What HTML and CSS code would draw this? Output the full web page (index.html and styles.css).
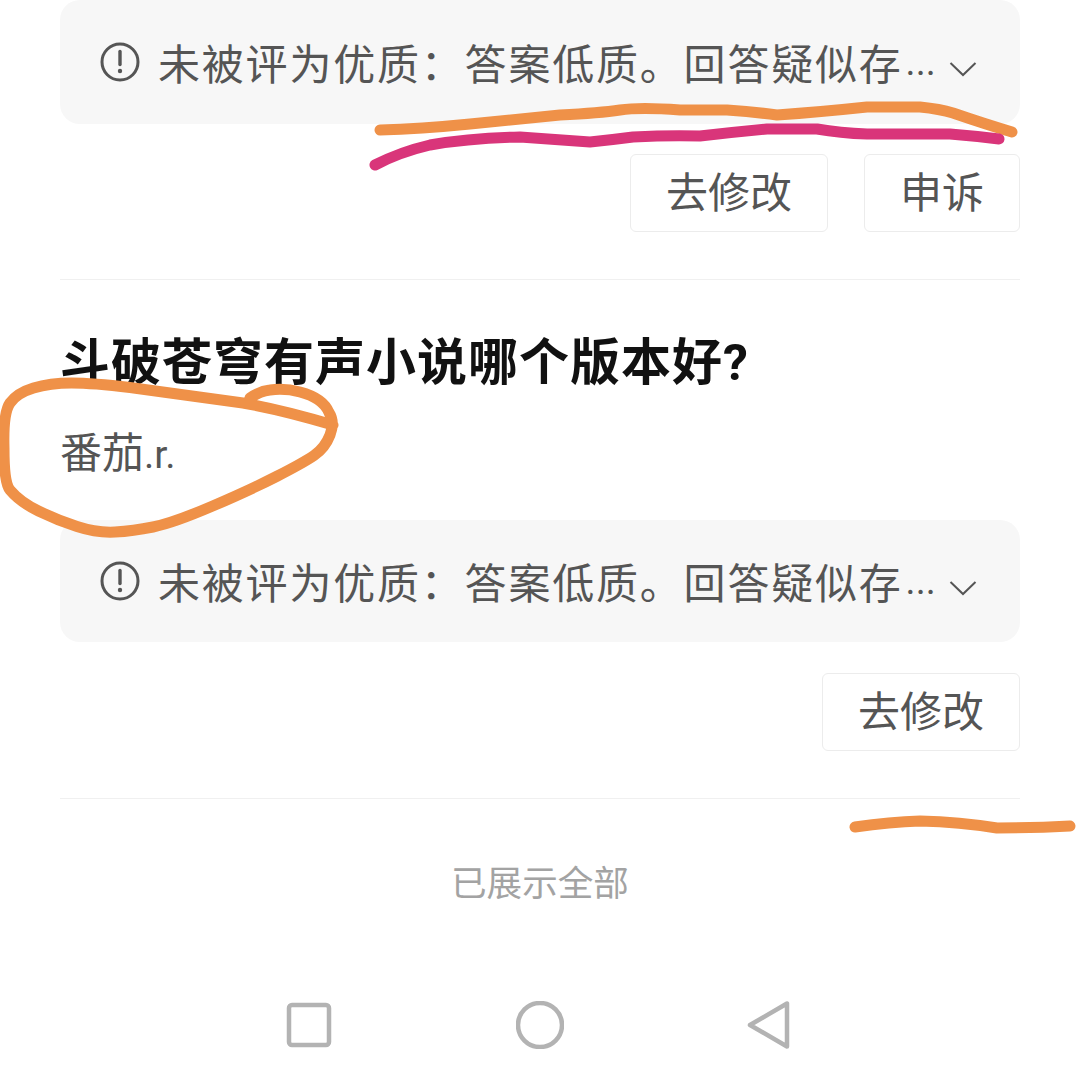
FILE: index.html
```html
<!DOCTYPE html>
<html lang="zh-CN">
<head>
<meta charset="utf-8">
<title>已展示全部</title>
<link rel="stylesheet" href="styles.css">
</head>
<body>
<div class="screen">
  <main class="list">
    <section class="item item-first">
      <div class="notice">
        <svg class="notice-icon" viewBox="0 0 40 40"><circle cx="20" cy="20" r="18" fill="none" stroke="#555" stroke-width="3"/><path d="M20 9.5v13" stroke="#555" stroke-width="3.4" stroke-linecap="round"/><circle cx="20" cy="29" r="2.2" fill="#555"/></svg>
        <span class="notice-text">未被评为优质&#xFF1A;答案低质。回答疑似存</span>
        <span class="notice-more">...</span>
        <svg class="chevron" viewBox="0 0 28 16"><path d="M1.5 2 14 14 26.500 2" fill="none" stroke="#555" stroke-width="2"/></svg>
      </div>
      <div class="actions">
        <button class="btn btn-wide">去修改</button>
        <button class="btn btn-narrow">申诉</button>
      </div>
    </section>
    <section class="item">
      <h2 class="title">斗破苍穹有声小说哪个版本好?</h2>
      <div class="author">番茄<span class="author-latin">.r.</span></div>
      <div class="notice notice-second">
        <svg class="notice-icon" viewBox="0 0 40 40"><circle cx="20" cy="20" r="18" fill="none" stroke="#555" stroke-width="3"/><path d="M20 9.5v13" stroke="#555" stroke-width="3.4" stroke-linecap="round"/><circle cx="20" cy="29" r="2.2" fill="#555"/></svg>
        <span class="notice-text">未被评为优质&#xFF1A;答案低质。回答疑似存</span>
        <span class="notice-more">...</span>
        <svg class="chevron" viewBox="0 0 28 16"><path d="M1.5 2 14 14 26.500 2" fill="none" stroke="#555" stroke-width="2"/></svg>
      </div>
      <div class="actions actions-second">
        <button class="btn btn-wide">去修改</button>
      </div>
    </section>
    <div class="end-note">已展示全部</div>
  </main>
  <nav class="navbar">
    <svg class="nav-icon nav-square" viewBox="0 0 48 48"><rect x="4" y="4" width="40" height="40" rx="3" fill="none" stroke="#b3b3b3" stroke-width="4.5"/></svg>
    <svg class="nav-icon" viewBox="0 0 48 48"><circle cx="24" cy="24" r="22" fill="none" stroke="#b3b3b3" stroke-width="4.5"/></svg>
    <svg class="nav-icon" viewBox="0 0 48 48"><path d="M3 24 40 2.500v43z" fill="none" stroke="#b3b3b3" stroke-width="4.5" stroke-linejoin="round"/></svg>
  </nav>
  <svg class="scribbles" viewBox="0 0 1080 1084">
    <path class="ink-orange" d="M380 130Q420 129 470 124T560 115Q600 113 620 110T680 110L727 110Q755 112 777 115Q820 112 867 107L920 107Q940 109 953 113Q985 124 1012 132"/>
    <path class="ink-pink" d="M375 165Q400 152 430 145Q470 138 520 137L590 142Q610 140 633 137Q670 135 700 136Q735 132 767 129L817 129Q840 133 867 134L950 134Q975 136 999 139"/>
    <path class="ink-orange" d="M250 398Q260 391 270 390Q285 388 300 392Q323 398 329 412.500Q335 422 330 435Q325 448 314 455.500Q303 463 276.500 476.500Q250 490 211.500 506.500Q173 523 153 527Q133 531 115 532Q97 533 77 526.500Q57 520 38.500 511Q20 502 10 490Q4 483 4 448Q3 413 10 403Q17 393 33.500 388Q50 383 71.500 383Q93 383 130 387.500L243 403Q283 410 333 425"/>
    <path class="ink-orange" d="M855 827Q890 822 920 821Q960 822 997 828Q1035 828 1070 826"/>
  </svg>
</div>
</body>
</html>
```

FILE: styles.css
```css
* { box-sizing: border-box; }
html, body { margin: 0; padding: 0; background: #fff; }
.screen {
  position: relative;
  width: 1080px;
  height: 1084px;
  overflow: hidden;
  font-family: "Noto Sans CJK SC", "Noto Sans", sans-serif;
  color: #555;
}
.list { padding: 0 60px; }
.item { border-bottom: 1px solid #f0f0f0; padding-bottom: 47px; }
.item-first { height: 280px; }
.notice {
  display: flex;
  align-items: center;
  height: 124px;
  padding: 0 43px 0 40px;
  background: #f7f7f7;
  border-radius: 20px;
}
.notice-second { height: 122px; margin-top: 40px; }
.notice-icon { width: 40px; height: 40px; flex: none; margin-right: 18px; }
.notice-text { font-size: 42px; letter-spacing: 1.8px; line-height: 60px; white-space: nowrap; }
.notice-more { font-family: "Roboto", sans-serif; font-size: 38px; line-height: 60px; margin-left: 3px; color: #555; }
.chevron { width: 28px; height: 16px; flex: none; margin-left: auto; margin-top: 14px; }
.actions { display: flex; justify-content: flex-end; gap: 36px; margin-top: 30px; }
.actions-second { margin-top: 31px; }
.btn {
  height: 78px;
  background: #fff;
  border: 1px solid #ececec;
  border-radius: 6px;
  font: inherit;
  font-size: 42px;
  color: #555;
  padding: 0 0 8px;
}
.btn-wide { width: 198px; }
.btn-narrow { width: 156px; }
.title {
  margin: 47px 0 0;
  font-family: "Roboto", "Noto Sans CJK SC", sans-serif;
  font-size: 50px;
  font-weight: 700;
  line-height: 72px;
  letter-spacing: 1px;
  color: #111;
}
.author {
  margin-top: 30px;
  font-family: "Roboto", "Noto Sans CJK SC", sans-serif;
  font-size: 42px;
  line-height: 50px;
  color: #555;
}
.author-latin { font-size: 39px; }
.end-note {
  margin-top: 57px;
  text-align: center;
  font-size: 35.600px;
  line-height: 50px;
  color: #a3a3a3;
}
.navbar {
  position: absolute;
  left: 0;
  right: 0;
  top: 1001px;
  display: flex;
  justify-content: center;
  gap: 183px;
}
.nav-icon { width: 48px; height: 48px; }
.scribbles { position: absolute; inset: 0; width: 1080px; height: 1084px; pointer-events: none; }
.ink-orange, .ink-pink { fill: none; stroke-width: 11; stroke-linecap: round; stroke-linejoin: round; }
.ink-orange { stroke: #ef9148; }
.ink-pink { stroke: #d9357a; }
```
